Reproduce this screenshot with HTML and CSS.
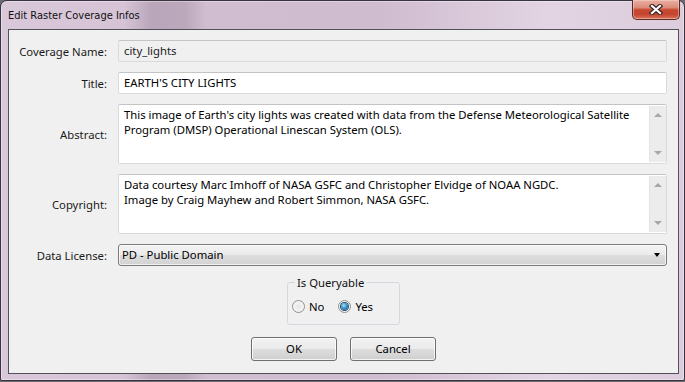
FILE: index.html
```html
<!DOCTYPE html>
<html>
<head>
<meta charset="utf-8">
<title>Edit Raster Coverage Infos</title>
<link rel="stylesheet" href="styles.css">
</head>
<body>
<div class="window">
  <div class="titlebar">
    <span class="title">Edit Raster Coverage Infos</span>
    <div class="close">
      <svg width="16" height="11" viewBox="0 0 16 11">
        <path d="M4 2 L12 9 M12 2 L4 9" stroke="#3c2624" stroke-width="4.4" stroke-linecap="square" fill="none"/>
        <path d="M4 2 L12 9 M12 2 L4 9" stroke="#ffffff" stroke-width="2.2" stroke-linecap="square" fill="none"/>
      </svg>
    </div>
  </div>
  <div class="client">
    <div class="form">
      <div class="lbl">Coverage Name:</div>
      <div class="input disabled">city_lights</div>

      <div class="lbl">Title:</div>
      <div class="input">EARTH'S CITY LIGHTS</div>

      <div class="lbl">Abstract:</div>
      <div class="textarea">
        <div class="ta-text">This image of Earth's city lights was created with data from the Defense Meteorological Satellite Program (DMSP) Operational Linescan System (OLS).</div>
        <div class="vscroll"><span class="arr up"></span><span class="arr down"></span></div>
      </div>

      <div class="lbl">Copyright:</div>
      <div class="textarea">
        <div class="ta-text">Data courtesy Marc Imhoff of NASA GSFC and Christopher Elvidge of NOAA NGDC.<br>Image by Craig Mayhew and Robert Simmon, NASA GSFC.</div>
        <div class="vscroll"><span class="arr up"></span><span class="arr down"></span></div>
      </div>

      <div class="lbl">Data License:</div>
      <div class="combo"><span>PD - Public Domain</span><span class="combo-arrow"></span></div>
    </div>

    <div class="group-row">
      <fieldset class="group">
        <legend>Is Queryable</legend>
        <div class="radios">
          <span class="radio-item"><span class="radio"></span>No</span>
          <span class="radio-item"><span class="radio checked"></span>Yes</span>
        </div>
      </fieldset>
    </div>

    <div class="buttons">
      <div class="btn">OK</div>
      <div class="btn">Cancel</div>
    </div>
  </div>
</div>
</body>
</html>
```
FILE: styles.css
```css
* { box-sizing: border-box; }
html, body {
  margin: 0;
  padding: 0;
  width: 685px;
  height: 382px;
  overflow: hidden;
  background: #6b6a70;
}
body {
  font-family: "Noto Sans", "Open Sans", sans-serif;
  font-size: 11.3px;
  color: #000;
}
.window {
  width: 685px;
  height: 381px;
  border: 1px solid #3a3340;
  border-radius: 7px 7px 2px 2px;
  background: linear-gradient(90deg, #d9c8d9 0%, #d6c4d6 18%, #b9a6ba 22%, #bba8bb 27%, #d0bdd0 30%, #cfbccf 55%, #e2d4e2 80%, #dcccdc 100%);
  display: flex;
  flex-direction: column;
  box-shadow: inset 0 0 0 1px rgba(255,255,255,0.35);
}
.titlebar {
  height: 28px;
  display: flex;
  justify-content: space-between;
  align-items: flex-start;
  padding: 0 4px 0 7px;
}
.title {
  font-family: "Liberation Sans Narrow", "DejaVu Sans Condensed", "Noto Sans", sans-serif;
  font-size: 11px;
  line-height: 14px;
  margin-top: 8px;
  color: #111;
}
.close {
  width: 48px;
  height: 20px;
  margin-top: -1px;
  border: 1px solid #5e2a24;
  border-top: none;
  border-radius: 0 0 5px 5px;
  background: linear-gradient(180deg, #eab0a4 0%, #dc8a79 40%, #c9472f 52%, #c54430 75%, #d9745c 100%);
  box-shadow: inset 0 0 0 1px rgba(255,220,210,0.45);
  display: flex;
  align-items: center;
  justify-content: center;
}
.close svg { display: block; margin-top: -1px; }
.client {
  margin: 0 5px 6px 7px;
  height: 345px;
  border: 1px solid #525058;
  background: #f0f0f0;
  display: flex;
  flex-direction: column;
}
.form {
  display: grid;
  grid-template-columns: 98px 549px;
  column-gap: 11px;
  row-gap: 10px;
  padding-top: 10px;
}
.lbl {
  text-align: right;
  align-self: center;
  line-height: 15px;
  color: #1a1a1a;
}
.input {
  height: 22px;
  border: 1px solid #dadada;
  border-top-color: #c4c4c4;
  border-radius: 2px;
  background: #fff;
  padding: 0 5px;
  line-height: 20px;
  white-space: nowrap;
}
.input.disabled {
  background: #f0f0f0;
  color: #222;
}
.textarea {
  height: 60px;
  border: 1px solid #dadada;
  border-top-color: #c4c4c4;
  border-radius: 2px;
  background: #fff;
  display: flex;
}
.ta-text {
  flex: 1;
  padding: 2px 5px 0 5px;
  line-height: 15px;
}
.vscroll {
  width: 17px;
  margin: 1px 0 1px 0;
  background: #ececec;
  border-left: 1px solid #e4e4e4;
  display: flex;
  flex-direction: column;
  justify-content: space-between;
  align-items: center;
  padding: 7px 0 7px;
}
.arr {
  width: 0;
  height: 0;
  border-left: 4px solid transparent;
  border-right: 4px solid transparent;
}
.arr.up { border-bottom: 4px solid #a8a8a8; }
.arr.down { border-top: 4px solid #a8a8a8; }
.combo {
  height: 22px;
  border: 1px solid #7a7a7a;
  border-radius: 3px;
  background: linear-gradient(180deg, #f3f3f3 0%, #ebebeb 48%, #dddddd 52%, #d2d2d2 100%);
  box-shadow: inset 0 0 0 1px rgba(255,255,255,0.7);
  display: flex;
  align-items: center;
  justify-content: space-between;
  padding: 0 5px 0 3px;
  line-height: 20px;
}
.combo-arrow {
  width: 0;
  height: 0;
  border-left: 3.5px solid transparent;
  border-right: 3.5px solid transparent;
  border-top: 4px solid #000;
  margin-right: 1px;
}
.group-row {
  display: flex;
  justify-content: center;
  margin-top: 9px;
}
.group {
  margin: 0;
  width: 113px;
  height: 50px;
  padding: 0 4px;
  border: 1px solid #d3d9df;
  border-radius: 3px;
}
.group legend {
  padding: 0 2px;
  margin-left: 3px;
  line-height: 15px;
  color: #111;
}
.radios {
  display: flex;
  gap: 14px;
  margin-top: 9px;
}
.radio-item {
  display: flex;
  align-items: center;
  gap: 4px;
  line-height: 15px;
}
.radio {
  width: 13px;
  height: 13px;
  border-radius: 50%;
  border: 1px solid #8f8f8f;
  background: radial-gradient(circle at 50% 50%, #e6e6e6 0%, #f6f6f6 70%, #ffffff 100%);
  display: flex;
  align-items: center;
  justify-content: center;
}
.radio.checked::after {
  content: "";
  width: 7px;
  height: 7px;
  border-radius: 50%;
  background: radial-gradient(circle at 40% 35%, #a6e4ff 0%, #3c94c8 45%, #17507e 100%);
  box-shadow: 0 0 0 1px #1d4a6b;
}
.buttons {
  display: flex;
  justify-content: center;
  gap: 13px;
  margin-top: 12px;
  padding-left: 0;
}
.btn {
  width: 86px;
  height: 24px;
  border: 1px solid #707070;
  border-radius: 3px;
  background: linear-gradient(180deg, #f2f2f2 0%, #ebebeb 48%, #dddddd 52%, #cfcfcf 100%);
  box-shadow: inset 0 0 0 1px rgba(255,255,255,0.75);
  text-align: center;
  line-height: 21px;
}
```
